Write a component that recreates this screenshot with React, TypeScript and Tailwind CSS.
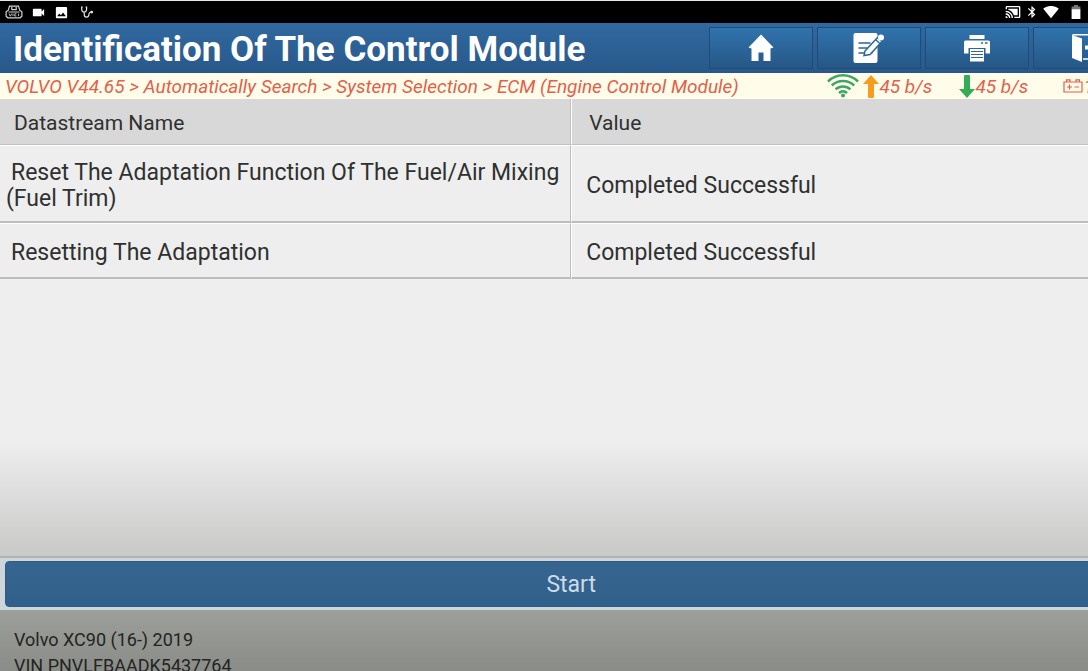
import { MdBluetooth, MdCastConnected, MdImage, MdSignalWifi4Bar, MdVideocam } from "react-icons/md";

const rows = [
  {
    name: "Reset The Adaptation Function Of The Fuel/Air Mixing (Fuel Trim)",
    value: "Completed Successful",
  },
  { name: "Resetting The Adaptation", value: "Completed Successful" },
];

const crumbs = [
  "VOLVO V44.65",
  "Automatically Search",
  "System Selection",
  "ECM (Engine Control Module)",
];

const VciIcon = () => (
  <svg width="18" height="14" viewBox="0 0 18 14" fill="none" stroke="#d4d4d4" strokeWidth="1.2">
    <path d="M4.5 1.2h9l1.2 4 2.2 1.6v4.4l-1.8 1.6H2.9l-1.8-1.6V6.8l2.2-1.6z" />
    <path d="M6.8 2v2.6h4.4V2M3.5 7h11" />
    <path d="M4 8.6l1.4 2.6 1.3-2.6M8 8.6v2.6M11.4 8.8H9.8v2.2h1.6M13.6 8.6v2.6" strokeWidth="0.9" />
  </svg>
);

const StethoscopeIcon = () => (
  <svg width="12" height="12" viewBox="0 0 12 12" fill="none" stroke="#e4e4e4" strokeWidth="1.2">
    <path d="M1.8 1H.7v2.2c0 1.8 1 3 2.4 3s2.5-1.2 2.5-3V1H4.5" />
    <path d="M3.2 6.2v2.3c0 1.5 1 2.6 2.4 2.6s2.3-1 2.3-2.5c0-1.3.6-2.2 2-2.4" />
    <circle cx="10.7" cy="6.1" r=".8" />
  </svg>
);

const BatteryIcon = () => (
  <svg width="10" height="14" viewBox="0 0 10 14">
    <path d="M3 0h4v1.5h2.4v3H.6v-3H3z" fill="#777" />
    <path d="M.6 4.2h8.8V14H.6z" fill="#fff" />
  </svg>
);

const HomeIcon = () => (
  <svg width="26" height="28" viewBox="0 0 26 28" fill="#fff">
    <path d="M13 .5L25.5 13.5 22.5 14.5V27h-7v-8.500h-5V27h-7V14.500L.5 13.500z" />
  </svg>
);

const NoteIcon = () => (
  <svg width="32" height="32" viewBox="0 0 32 32">
    <path d="M2.500 1h20a2 2 0 0 1 2 2v26a2 2 0 0 1-2 2h-20a2 2 0 0 1-2-2V3a2 2 0 0 1 2-2z" fill="#fff" />
    <path d="M5.500 11h12M5.500 16h9M5.500 21h14" stroke="#2a659b" strokeWidth="1.6" />
    <path d="M12 19L24.500 5.500l4.500 4L17 22.500l-6 1z" fill="#fff" stroke="#2a659b" strokeWidth="1.5" />
    <path d="M22.500 7.500l4.300 4" stroke="#2a659b" strokeWidth="1.3" />
    <circle cx="28" cy="5.500" r="3" fill="#fff" />
  </svg>
);

const PrinterIcon = () => (
  <svg width="28" height="28" viewBox="0 0 28 28">
    <path d="M6.5 1h15v4h-15z" fill="#fff" />
    <path d="M2.5 6.5h23A1.5 1.5 0 0 1 27 8v11.5h-4.500V14H5.500v5.500H1V8a1.5 1.5 0 0 1 1.5-1.5z" fill="#fff" />
    <path d="M18 9h2M22 9h2.5" stroke="#2a659b" strokeWidth="1.6" />
    <path d="M7 15h14v12.500H7z" fill="#fff" />
    <path d="M8 17.500h12M8 20.500h12M8 23.500h12" stroke="#2a659b" strokeWidth="1.2" />
  </svg>
);

const ExitIcon = () => (
  <svg width="28" height="30" viewBox="0 0 28 30">
    <path d="M1 2l10 3.5V29L1 25z" fill="#fff" />
    <path d="M1.5 1.8H19V9M19 18.500v7.500h-7" fill="none" stroke="#fff" strokeWidth="1.5" />
    <path d="M14 12.500h7V8.500l6.5 6-6.5 6v-4h-7z" fill="#fff" />
  </svg>
);

const WifiIcon = () => (
  <svg width="32" height="24" viewBox="0 0 32 24" fill="none" stroke="#3da566" strokeWidth="2.5">
    <path d="M1 7.5C9.5-.8 22.5-.8 31 7.5M4.8 11.5c6.3-6 16.1-6 22.4 0M8.6 15.3c4.2-3.9 10.6-3.9 14.8 0M12 19c2.3-2.2 5.7-2.2 8 0" />
    <circle cx="16" cy="21.5" r="2" fill="#3da566" stroke="none" />
  </svg>
);

const UpIcon = () => (
  <svg width="16" height="23" viewBox="0 0 16 23" fill="#f79d1e">
    <path d="M8 0l8 9h-5v13a1 1 0 0 1-1 1H6a1 1 0 0 1-1-1V9H0z" />
  </svg>
);

const DownIcon = () => (
  <svg width="16" height="23" viewBox="0 0 16 23" fill="#34ad57">
    <path d="M8 23l8-9h-5V1a1 1 0 0 0-1-1H6a1 1 0 0 0-1 1v13H0z" />
  </svg>
);

const VoltageIcon = () => (
  <svg width="20" height="14" viewBox="0 0 20 14" fill="none" stroke="#e2604c" strokeWidth="1.2">
    <path d="M1 3h18v10H1zM3.5 3V.8h3.500V3M13 3V.8h3.500V3M4 8h5M6.500 5.500v5M11.500 8h4.500" />
  </svg>
);

const tools = [
  { label: "Home", icon: <HomeIcon /> },
  { label: "Feedback", icon: <NoteIcon /> },
  { label: "Print", icon: <PrinterIcon /> },
  { label: "Exit", icon: <ExitIcon /> },
];

const StatusBar = () => (
  <div className="flex h-[23px] shrink-0 items-center justify-between border-t border-[#e8e8e8] bg-black pl-[5px] text-white">
    <div className="flex items-center gap-2">
      <VciIcon />
      <MdVideocam size={15} />
      <MdImage size={15} />
      <span className="ml-1">
        <StethoscopeIcon />
      </span>
    </div>
    {/* the screen runs on past the right edge of the window */}
    <div className="mr-[61px] flex items-center gap-1">
      <MdCastConnected size={16} />
      <MdBluetooth size={14} />
      <MdSignalWifi4Bar size={16} />
      <span className="ml-2">
        <BatteryIcon />
      </span>
    </div>
  </div>
);

const Header = () => (
  <header className="flex h-[50px] shrink-0 items-center justify-between bg-linear-to-b from-[#3069a0] to-[#28588a] pr-[5px] pl-[13px]">
    <h1 className="pt-1 text-[35px] leading-[50px] font-bold whitespace-nowrap text-white">
      Identification Of The Control Module
    </h1>
    <div className="flex gap-1">
      {tools.map((tool) => (
        <button
          key={tool.label}
          aria-label={tool.label}
          className="flex h-[42px] w-[104px] items-center justify-center border border-[#204c78] bg-linear-to-b from-[#3073ad] to-[#265786]"
        >
          {tool.icon}
        </button>
      ))}
    </div>
  </header>
);

const PathBar = () => (
  <div className="flex h-[26px] shrink-0 items-center justify-between bg-[#fffde9] pl-[5px] text-[19px] leading-[26px] whitespace-nowrap text-[#e2604c] italic">
    <nav className="pt-[2px]">{crumbs.join(" > ")}</nav>
    <div className="flex w-[315px] items-center">
      <WifiIcon />
      <span className="ml-1 flex w-[96px] items-center">
        <UpIcon />
        <span className="pt-[2px]">45 b/s</span>
      </span>
      <span className="flex w-[104px] items-center">
        <DownIcon />
        <span className="pt-[2px]">45 b/s</span>
      </span>
      <VoltageIcon />
      <span className="pt-[2px]">1</span>
    </div>
  </div>
);

const DataTable = () => (
  <table className="w-full table-fixed border-separate border-spacing-0 text-left text-[#2f3130]">
    <thead className="bg-[#d7d8d7] text-[21px] leading-[26px]">
      <tr className="h-[46px]">
        <th className="border-r border-b border-[#bfc0bf] pt-[2px] pl-[14px] font-normal">Datastream Name</th>
        <th className="border-b border-l border-b-[#bfc0bf] border-l-white pt-[2px] pl-[17px] font-normal">
          Value
        </th>
      </tr>
    </thead>
    <tbody className="text-[23px] leading-[26px]">
      {rows.map((row) => (
        <tr key={row.name} className="h-[56px]">
          <td className="border-t border-r border-b-2 border-[#bcbdbc] border-t-white pt-[14px] pb-[9px] pl-[6px] indent-[5px]">
            {row.name}
          </td>
          <td className="border-t border-b-2 border-l border-t-white border-b-[#bcbdbc] border-l-white pt-[14px] pb-[9px] pl-[9px] indent-[5px]">
            {row.value}
          </td>
        </tr>
      ))}
    </tbody>
  </table>
);

export default function App() {
  return (
    <div className="h-screen overflow-hidden font-['Roboto',sans-serif]">
      <div className="flex h-full w-[105%] flex-col">
        <StatusBar />
        <Header />
        <PathBar />
        <main className="flex-1 bg-linear-to-b from-[#edeeed] from-75% to-[#c9cac8]">
          <DataTable />
        </main>
        <div className="shrink-0 border-t-2 border-[#b1b3b2] bg-[#cfd6da] px-[5px] py-[3px]">
          <button className="block h-[46px] w-full rounded-[4px] border border-[#2f5c86] bg-linear-to-b from-[#36668f] to-[#315f8b] pt-[3px] text-[23px] text-[#ccdbe8]">
            Start
          </button>
        </div>
        <footer className="h-[61px] shrink-0 overflow-hidden bg-linear-to-b from-[#9d9f9b] to-[#8a8c88] pt-[17px] pl-[14px] text-[18px] leading-[26px] text-[#232423]">
          <p>Volvo XC90 (16-) 2019</p>
          <p>VIN PNVLFBAADK5437764</p>
        </footer>
      </div>
    </div>
  );
}
